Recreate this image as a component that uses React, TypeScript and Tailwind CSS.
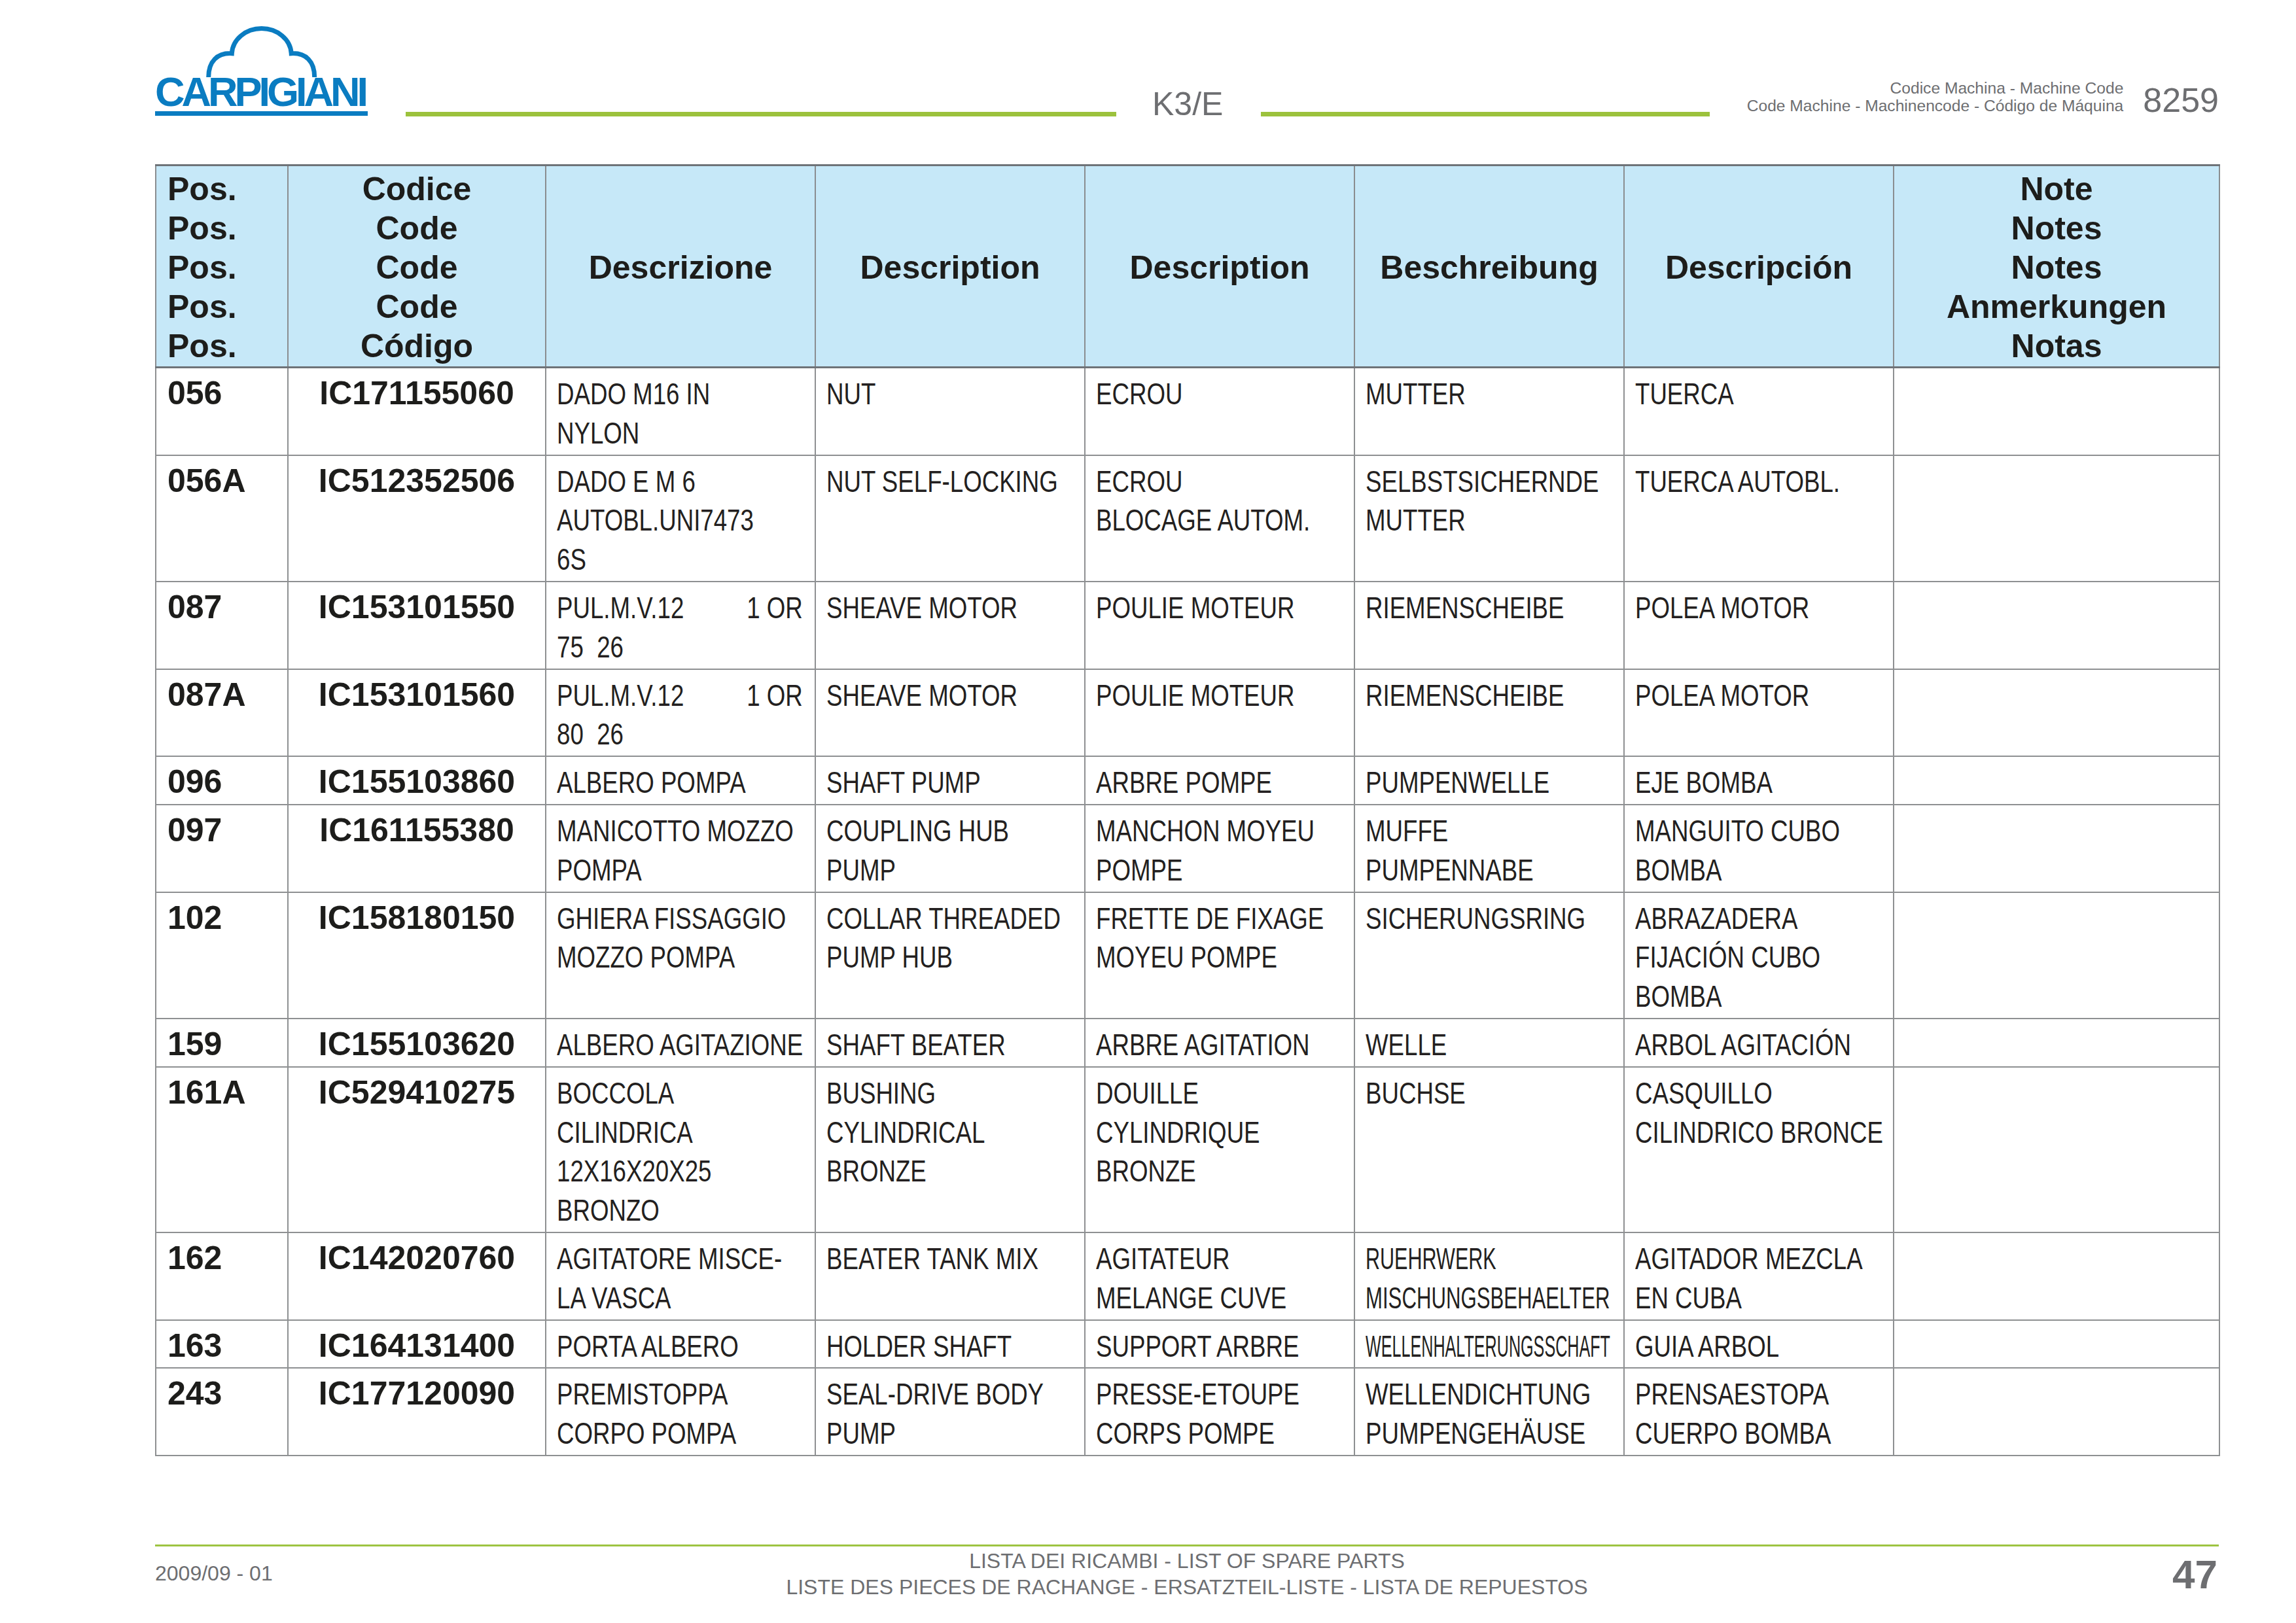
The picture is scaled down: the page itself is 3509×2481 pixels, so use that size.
import React from "react";

type Row = {
  pos: string;
  code: string;
  it: string[];
  en: string[];
  fr: string[];
  de: string[];
  es: string[];
};

const rows: Row[] = [
  { pos: "056", code: "IC171155060", it: ["DADO M16 IN", "NYLON"], en: ["NUT"], fr: ["ECROU"], de: ["MUTTER"], es: ["TUERCA"] },
  {
    pos: "056A",
    code: "IC512352506",
    it: ["DADO E M 6", "AUTOBL.UNI7473", "6S"],
    en: ["NUT SELF-LOCKING"],
    fr: ["ECROU", "BLOCAGE AUTOM."],
    de: ["SELBSTSICHERNDE", "MUTTER"],
    es: ["TUERCA AUTOBL."],
  },
  { pos: "087", code: "IC153101550", it: ["PUL.M.V.12\t1 OR", "75  26"], en: ["SHEAVE MOTOR"], fr: ["POULIE MOTEUR"], de: ["RIEMENSCHEIBE"], es: ["POLEA MOTOR"] },
  { pos: "087A", code: "IC153101560", it: ["PUL.M.V.12\t1 OR", "80  26"], en: ["SHEAVE MOTOR"], fr: ["POULIE MOTEUR"], de: ["RIEMENSCHEIBE"], es: ["POLEA MOTOR"] },
  { pos: "096", code: "IC155103860", it: ["ALBERO POMPA"], en: ["SHAFT PUMP"], fr: ["ARBRE POMPE"], de: ["PUMPENWELLE"], es: ["EJE BOMBA"] },
  {
    pos: "097",
    code: "IC161155380",
    it: ["MANICOTTO MOZZO", "POMPA"],
    en: ["COUPLING HUB", "PUMP"],
    fr: ["MANCHON MOYEU", "POMPE"],
    de: ["MUFFE", "PUMPENNABE"],
    es: ["MANGUITO CUBO", "BOMBA"],
  },
  {
    pos: "102",
    code: "IC158180150",
    it: ["GHIERA FISSAGGIO", "MOZZO POMPA"],
    en: ["COLLAR THREADED", "PUMP HUB"],
    fr: ["FRETTE DE FIXAGE", "MOYEU POMPE"],
    de: ["SICHERUNGSRING"],
    es: ["ABRAZADERA", "FIJACIÓN CUBO", "BOMBA"],
  },
  { pos: "159", code: "IC155103620", it: ["ALBERO AGITAZIONE"], en: ["SHAFT BEATER"], fr: ["ARBRE AGITATION"], de: ["WELLE"], es: ["ARBOL AGITACIÓN"] },
  {
    pos: "161A",
    code: "IC529410275",
    it: ["BOCCOLA", "CILINDRICA", "12X16X20X25", "BRONZO"],
    en: ["BUSHING", "CYLINDRICAL", "BRONZE"],
    fr: ["DOUILLE", "CYLINDRIQUE", "BRONZE"],
    de: ["BUCHSE"],
    es: ["CASQUILLO", "CILINDRICO BRONCE"],
  },
  {
    pos: "162",
    code: "IC142020760",
    it: ["AGITATORE MISCE-", "LA VASCA"],
    en: ["BEATER TANK MIX"],
    fr: ["AGITATEUR", "MELANGE CUVE"],
    de: ["RUEHRWERK", "MISCHUNGSBEHAELTER"],
    es: ["AGITADOR MEZCLA", "EN CUBA"],
  },
  { pos: "163", code: "IC164131400", it: ["PORTA ALBERO"], en: ["HOLDER SHAFT"], fr: ["SUPPORT ARBRE"], de: ["WELLENHALTERUNGSSCHAFT"], es: ["GUIA ARBOL"] },
  {
    pos: "243",
    code: "IC177120090",
    it: ["PREMISTOPPA", "CORPO POMPA"],
    en: ["SEAL-DRIVE BODY", "PUMP"],
    fr: ["PRESSE-ETOUPE", "CORPS POMPE"],
    de: ["WELLENDICHTUNG", "PUMPENGEHÄUSE"],
    es: ["PRENSAESTOPA", "CUERPO BOMBA"],
  },
];

// the sheet prints descriptions in a condensed face; long German words are squeezed further
const squeeze: Record<string, string> = {
  RUEHRWERK: "scale-x-[0.65]",
  MISCHUNGSBEHAELTER: "scale-x-[0.663]",
  WELLENHALTERUNGSSCHAFT: "scale-x-[0.535]",
};

const Cond = ({ text, right }: { text: string; right?: boolean }) => (
  <span
    className={`inline-block whitespace-pre ${right ? "origin-right" : "origin-left"} ${squeeze[text] ?? "scale-x-[0.78]"}`}
  >
    {text}
  </span>
);

const Logo = () => (
  <div className="w-[325px] mb-[1px] flex flex-col">
    <svg width="325" height="80" viewBox="0 0 325 80" className="block">
      <path
        d="M 81.7 80 C 81.7 56, 95 42.5, 117.3 43.7 A 45.5 40 0 0 1 208.2 43.7 C 230.4 42.5, 243.7 56, 243.7 80"
        fill="none"
        stroke="#0a7cc1"
        strokeWidth="7"
      />
    </svg>
    <div className="font-bold text-[63px] leading-[45px] tracking-[-5px] text-[#0a7cc1] whitespace-nowrap">
      CARPIGIANI
    </div>
    <div className="mt-[7px] h-[7px] w-[325px] bg-[#0a7cc1]" />
  </div>
);

const DescCell = ({ lines }: { lines: string[] }) => (
  <td className="border-2 border-[#8e9092] align-top pl-[16px] pr-[8px] pt-[9px] pb-[3px] text-[47px] leading-[59.8px] text-[#231f20] overflow-hidden">
    {lines.map((l) =>
      l.includes("\t") ? (
        <div key={l} className="flex justify-between pr-[10px] whitespace-nowrap">
          <Cond text={l.split("\t")[0]} />
          <Cond text={l.split("\t")[1]} right />
        </div>
      ) : (
        <div key={l} className="whitespace-pre">
          <Cond text={l} />
        </div>
      )
    )}
  </td>
);

const headCell =
  "border-2 border-[#8a8d90] border-t-[3px] border-t-[#6e7378] border-b-[3px] border-b-[#6e7378] bg-[#c6e8f8] align-middle pt-[5px] pb-[1px] text-center";

export default function App() {
  return (
    <div className="w-[3509px] h-[2481px] bg-white flex flex-col pl-[237px] pr-[118px] font-['Liberation_Sans',Arial,sans-serif] text-[#1d1d1b]">
      {/* top header */}
      <div className="pt-[38px] h-[178px] flex items-end shrink-0">
        <Logo />
        <div className="ml-[58px] w-[1086px] h-[7px] bg-[#9cc23c]" />
        <div className="ml-[55px] text-[50px] leading-[50px] mb-[-6px] text-[#6d6e71]">K3/E</div>
        <div className="ml-[58px] w-[686px] h-[7px] bg-[#9cc23c]" />
        <div className="flex-1 text-right text-[24.6px] leading-[27px] text-[#6d6e71] mb-[3px] whitespace-nowrap">
          <div>Codice Machina - Machine Code</div>
          <div>Code Machine - Machinencode - Código de Máquina</div>
        </div>
        <div className="ml-[30px] text-[52px] leading-[52px] mb-[-1px] text-[#6d6e71]">8259</div>
      </div>

      {/* parts table */}
      <table className="mt-[73px] w-[3154px] table-fixed border-collapse shrink-0">
        <colgroup>
          <col className="w-[202px]" />
          <col className="w-[394px]" />
          <col className="w-[412px]" />
          <col className="w-[412px]" />
          <col className="w-[412px]" />
          <col className="w-[412px]" />
          <col className="w-[412px]" />
          <col className="w-[498px]" />
        </colgroup>
        <thead>
          <tr className="font-bold text-[50px] leading-[60px]">
            <th className={`${headCell} !text-left pl-[17px]`}>
              <div>Pos.</div>
              <div>Pos.</div>
              <div>Pos.</div>
              <div>Pos.</div>
              <div>Pos.</div>
            </th>
            <th className={headCell}>
              <div>Codice</div>
              <div>Code</div>
              <div>Code</div>
              <div>Code</div>
              <div>Código</div>
            </th>
            <th className={headCell}>Descrizione</th>
            <th className={headCell}>Description</th>
            <th className={headCell}>Description</th>
            <th className={headCell}>Beschreibung</th>
            <th className={headCell}>Descripción</th>
            <th className={headCell}>
              <div>Note</div>
              <div>Notes</div>
              <div>Notes</div>
              <div>Anmerkungen</div>
              <div>Notas</div>
            </th>
          </tr>
        </thead>
        <tbody>
          {rows.map((r) => (
            <tr key={r.pos}>
              <td className="border-2 border-[#8e9092] align-top pl-[17px] pt-[9px] pb-[3px] font-bold text-[50px] leading-[59.8px] text-[#1d1d1b]">
                {r.pos}
              </td>
              <td className="border-2 border-[#8e9092] align-top text-center pt-[9px] pb-[3px] font-bold text-[50px] leading-[59.8px] text-[#1d1d1b]">
                {r.code}
              </td>
              <DescCell lines={r.it} />
              <DescCell lines={r.en} />
              <DescCell lines={r.fr} />
              <DescCell lines={r.de} />
              <DescCell lines={r.es} />
              <td className="border-2 border-[#8e9092]" />
            </tr>
          ))}
        </tbody>
      </table>

      {/* footer */}
      <div className="mt-auto h-[120px] shrink-0">
        <div className="h-[3px] bg-[#9dc441]" />
        <div className="grid grid-cols-[1fr_auto_1fr] items-start text-[#6d6e71]">
          <div className="mt-[21px] text-[32px] leading-[40px]">2009/09 - 01</div>
          <div className="mt-[2px] text-center text-[32px] leading-[40px] whitespace-nowrap">
            <div>LISTA DEI RICAMBI - LIST OF SPARE PARTS</div>
            <div>LISTE DES PIECES DE RACHANGE - ERSATZTEIL-LISTE - LISTA DE REPUESTOS</div>
          </div>
          <div className="mt-[12px] text-right pr-[2px] font-bold text-[62px] leading-[62px]">47</div>
        </div>
      </div>
    </div>
  );
}
